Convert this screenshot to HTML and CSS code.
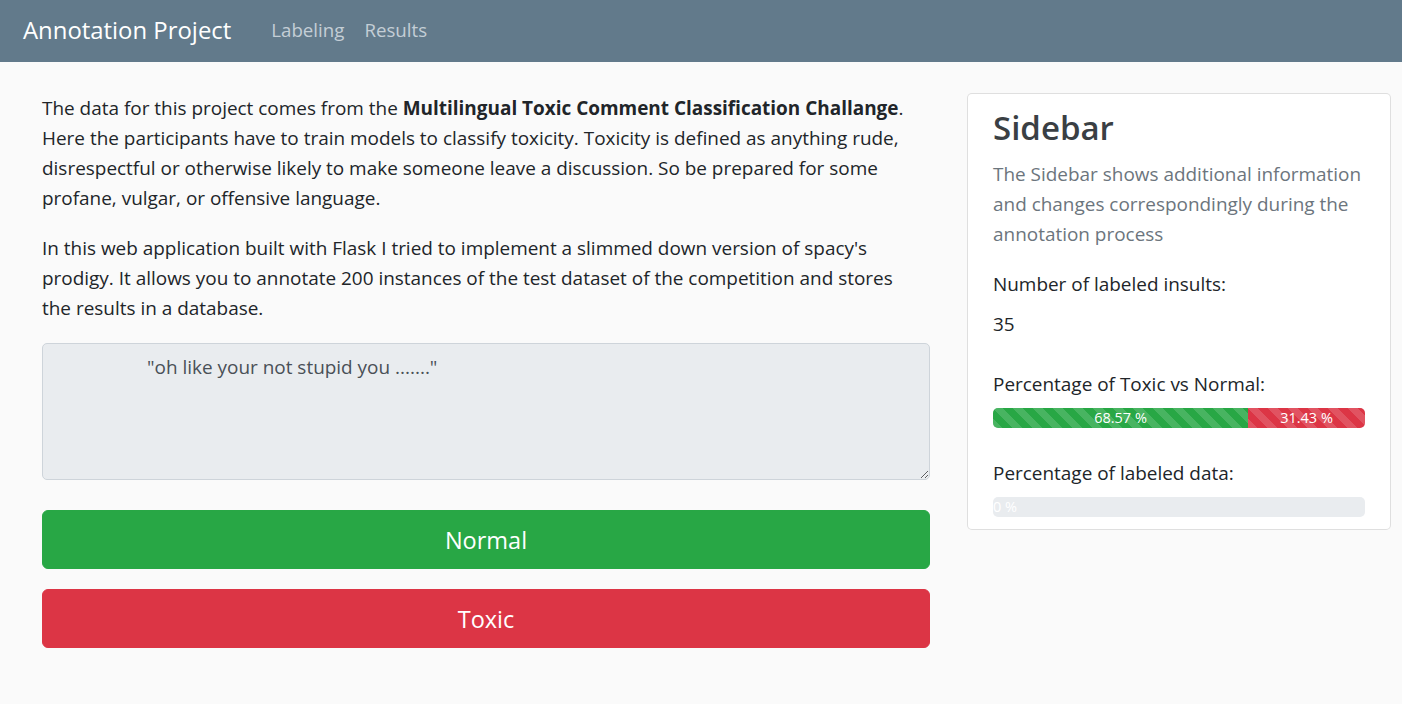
FILE: index.html
```html
<!DOCTYPE html>
<html lang="en">
<head>
<meta charset="utf-8">
<title>Annotation Project</title>
<link rel="stylesheet" href="styles.css">
</head>
<body>
<nav class="navbar">
  <a class="brand" href="#">Annotation Project</a>
  <ul class="nav">
    <li><a class="nav-link" href="#">Labeling</a></li>
    <li><a class="nav-link" href="#">Results</a></li>
  </ul>
</nav>
<main class="page">
  <section class="content">
    <p>The data for this project comes from the <b>Multilingual Toxic Comment Classification Challange</b>. Here the participants have to train models to classify toxicity. Toxicity is defined as anything rude, disrespectful or otherwise likely to make someone leave a discussion. So be prepared for some profane, vulgar, or offensive language.</p>
    <p>In this web application built with Flask I tried to implement a slimmed down version of spacy's prodigy. It allows you to annotate 200 instances of the test dataset of the competition and stores the results in a database.</p>
    <form class="label-form">
      <textarea class="comment" rows="4" readonly>"oh like your not stupid you ......."</textarea>
      <button type="button" class="btn btn-normal">Normal</button>
      <button type="button" class="btn btn-toxic">Toxic</button>
    </form>
  </section>
  <aside class="card">
    <h2 class="card-title">Sidebar</h2>
    <p class="muted">The Sidebar shows additional information and changes correspondingly during the annotation process</p>
    <p class="stat-label">Number of labeled insults:</p>
    <p class="stat-value">35</p>
    <p class="stat-label gap-lg">Percentage of Toxic vs Normal:</p>
    <div class="progress">
      <div class="bar bar-green" style="width: 68.57%">68.57 %</div>
      <div class="bar bar-red" style="width: 31.43%">31.43 %</div>
    </div>
    <p class="stat-label gap-lg">Percentage of labeled data:</p>
    <div class="progress">
      <div class="bar bar-empty" style="width: 0%">0 %</div>
    </div>
  </aside>
</main>
</body>
</html>
```

FILE: styles.css
```css
* { box-sizing: border-box; }

html, body {
  margin: 0;
  padding: 0;
}

body {
  background: #fafafa;
  color: #212529;
  font-family: "Open Sans", "Noto Sans", sans-serif;
  font-size: 18.95px;
  line-height: 30px;
}

.navbar {
  height: 62px;
  background: #627a8b;
  display: flex;
  align-items: center;
  padding: 0 0 2px 23px;
}

.brand {
  color: #ffffff;
  text-decoration: none;
  font-size: 23.9px;
  line-height: 34px;
  margin-right: 30px;
}

.nav {
  list-style: none;
  display: flex;
  margin: 0;
  padding: 0;
}

.nav-link {
  display: block;
  color: #c4ced6;
  text-decoration: none;
  padding: 0 10px;
  font-size: 18.7px;
}

.page {
  display: grid;
  grid-template-columns: 888px 424px;
  column-gap: 37px;
  align-items: start;
  padding: 31px 11px 40px 42px;
}

.content p {
  margin: 0 0 20px 0;
  padding-right: 8px;
}

.label-form {
  display: flex;
  flex-direction: column;
}

.comment {
  display: block;
  width: 100%;
  height: 137px;
  margin: 0 0 30px 0;
  padding: 7.5px 15px;
  text-indent: 89px;
  font-family: inherit;
  font-size: 18.95px;
  line-height: 30px;
  color: #495057;
  background: #e9ecef;
  border: 1px solid #ced4da;
  border-radius: 5px;
  resize: vertical;
  outline: none;
}

.btn {
  display: block;
  width: 100%;
  height: 59px;
  border: 1px solid transparent;
  border-radius: 6px;
  color: #ffffff;
  font-family: inherit;
  font-size: 23.5px;
  line-height: 30px;
  cursor: pointer;
}

.btn-normal {
  background: #28a745;
  border-color: #28a745;
  margin-bottom: 20px;
}

.btn-toxic {
  background: #dc3545;
  border-color: #dc3545;
}

.card {
  background: #ffffff;
  border: 1px solid rgba(0, 0, 0, 0.125);
  border-radius: 5px;
  padding: 13px 25px 12px 25px;
}

.card-title {
  margin: 0 0 10px 0;
  font-size: 33px;
  line-height: 42px;
  font-weight: 600;
  color: #3a3f44;
}

.card p {
  margin: 0;
}

.muted {
  color: #6c757d;
}

.stat-label {
  margin-top: 20px !important;
}

.stat-value {
  margin-top: 10px !important;
}

.stat-label.gap-lg {
  margin-top: 30px !important;
}

.progress {
  display: flex;
  height: 20px;
  margin-top: 9px;
  background: #e9ecef;
  border-radius: 5px;
  overflow: hidden;
  font-size: 14.5px;
  line-height: 20px;
}

.bar {
  display: flex;
  justify-content: center;
  color: #ffffff;
  white-space: nowrap;
  background-image: linear-gradient(45deg,
    rgba(255, 255, 255, 0.15) 25%, transparent 25%,
    transparent 50%, rgba(255, 255, 255, 0.15) 50%,
    rgba(255, 255, 255, 0.15) 75%, transparent 75%, transparent);
  background-size: 20px 20px;
}

.bar-green { background-color: #28a745; }
.bar-red { background-color: #dc3545; }

.bar-empty {
  background-color: transparent;
  background-image: none;
  justify-content: flex-start;
  overflow: visible;
}
```
